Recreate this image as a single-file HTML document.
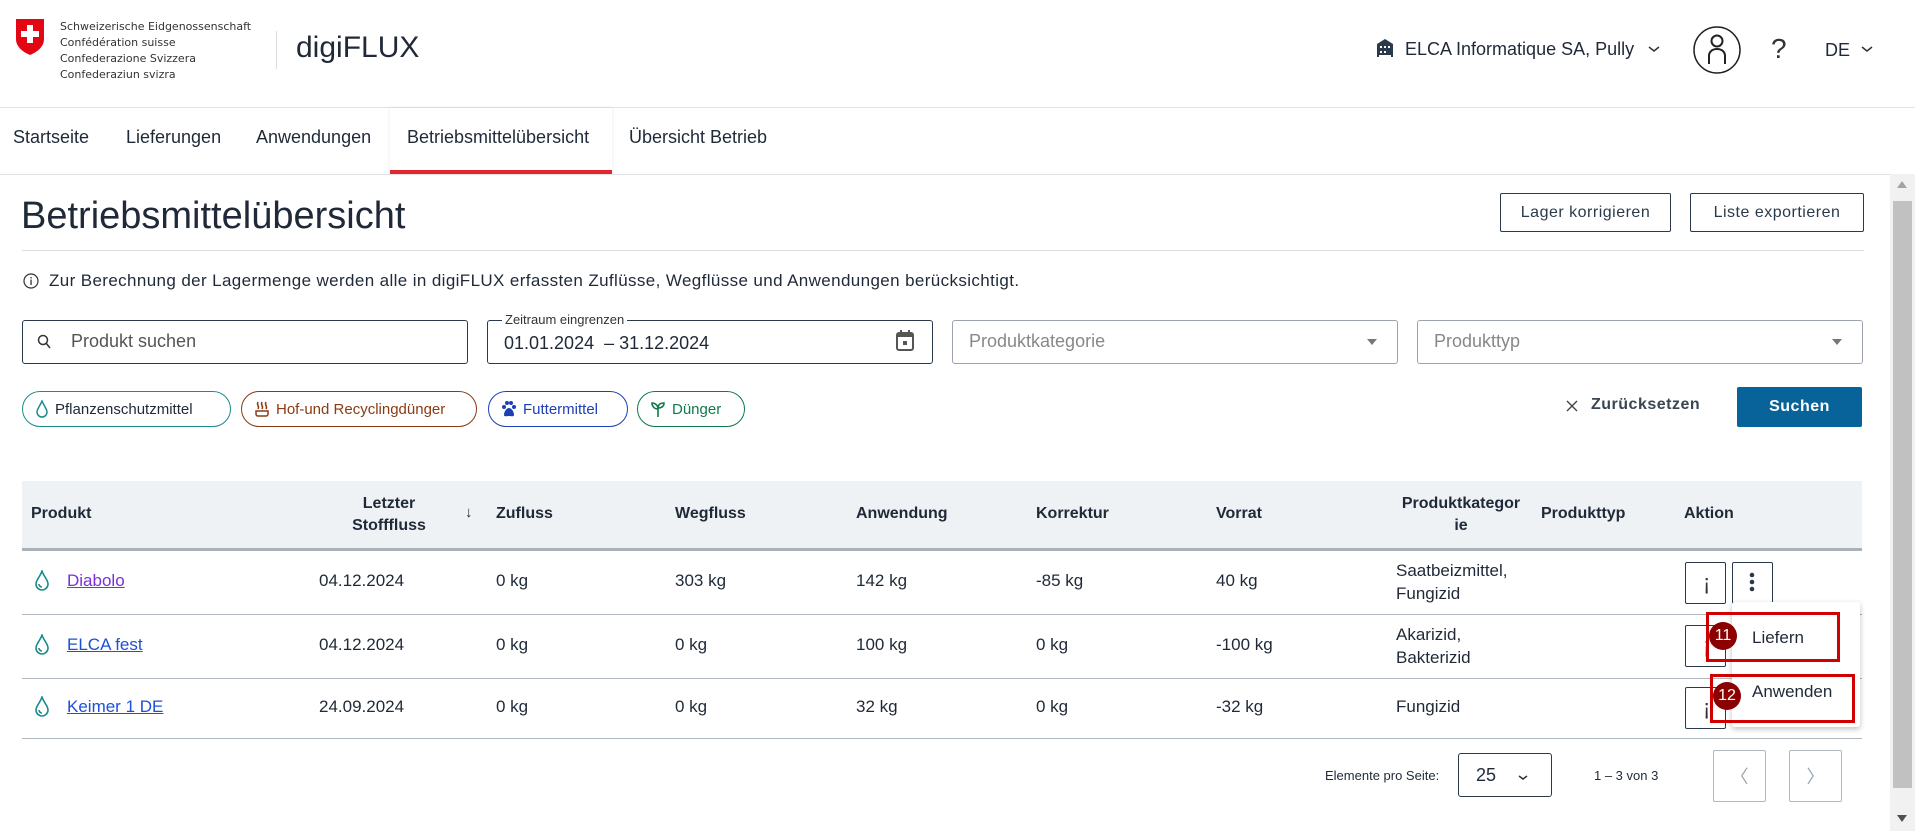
<!DOCTYPE html>
<html><head><meta charset="utf-8"><style>
*{box-sizing:border-box;margin:0;padding:0}
body{width:1915px;height:831px;overflow:hidden;background:#fff;font-family:"Liberation Sans",Arial,sans-serif;color:#1f2937;position:relative}
.a{position:absolute;white-space:nowrap}
.tab{position:absolute;top:127px;font-size:18px;color:#1f2937}
.btn{position:absolute;border:1px solid #2b3a4a;border-radius:2px;font-size:16px;color:#2b3a4a;display:flex;align-items:center;justify-content:center;letter-spacing:.5px}
.inp{position:absolute;top:320px;height:44px;border:1px solid #6b7280;border-radius:3px}
.chip{position:absolute;top:391px;height:36px;border:1px solid;border-radius:18px;font-size:15px;display:flex;align-items:center;padding-left:12px;gap:6px}
.th{position:absolute;font-size:16px;font-weight:bold;color:#1f2937}
.td{position:absolute;font-size:17px;color:#1f2937}
.hl{position:absolute;left:22px;width:1840px;height:1px;background:#b0b7bf}
.lnk{position:absolute;font-size:17px;text-decoration:underline;left:67px}
.ib{position:absolute;width:41px;height:42px;border:1px solid #2b3a4a;border-radius:2px;background:#fff}
</style></head><body>
<svg class="a" style="left:15px;top:18px" width="30" height="38" viewBox="0 0 30 38"><path d="M1 1h28v20c0 8-7 13-14 16C8 34 1 29 1 21z" fill="#e30613"/><path d="M12 7h6v6h6v6h-6v6h-6v-6H6v-6h6z" fill="#fff"/></svg>
<div class="a" style="left:60px;top:19px;line-height:16px;color:#333;font-family:'DejaVu Sans',sans-serif;font-size:11px">Schweizerische Eidgenossenschaft<br>Confédération suisse<br>Confederazione Svizzera<br>Confederaziun svizra</div>
<div class="a" style="left:276px;top:31px;width:1px;height:38px;background:#ddd"></div>
<div class="a" style="left:296px;top:31px;font-size:30px;color:#1f2937">digiFLUX</div>
<svg class="a" style="left:1375px;top:38px" width="20" height="20" viewBox="0 0 20 20"><path d="M2 6 10 1 18 6v13H2z" fill="#2b3a4a"/><g fill="#fff"><rect x="5" y="8" width="2" height="2"/><rect x="9" y="8" width="2" height="2"/><rect x="13" y="8" width="2" height="2"/><rect x="5" y="13" width="2" height="2"/><rect x="9" y="13" width="2" height="2"/><rect x="4" y="17" width="12" height="2"/></g></svg>
<div class="a" style="left:1405px;top:39px;font-size:18px;color:#1f2937">ELCA Informatique SA, Pully</div>
<svg class="a" style="left:1647px;top:45px" width="14" height="9"><path d="M2 2l5 4 5-4" fill="none" stroke="#333" stroke-width="1.5"/></svg>
<svg class="a" style="left:1692px;top:25px" width="50" height="50" viewBox="0 0 50 50"><circle cx="25" cy="25" r="23" fill="none" stroke="#222" stroke-width="1.5"/><circle cx="25" cy="16" r="5.5" fill="none" stroke="#222" stroke-width="2"/><path d="M17 39V31c0-4 3-7 8-7s8 3 8 7v8" fill="none" stroke="#222" stroke-width="2"/></svg>
<div class="a" style="left:1771px;top:33px;font-size:28px;color:#333">?</div>
<div class="a" style="left:1825px;top:40px;font-size:18px;color:#1f2937">DE</div>
<svg class="a" style="left:1860px;top:45px" width="14" height="9"><path d="M2 2l5 4 5-4" fill="none" stroke="#333" stroke-width="1.5"/></svg>
<div class="a" style="left:0;top:107px;width:1915px;height:1px;background:#e0e3e6"></div>
<div class="a" style="left:390px;top:108px;width:222px;height:66px;background:#fff;box-shadow:0 0 4px rgba(0,0,0,.08)"></div>
<div class="a" style="left:390px;top:170px;width:222px;height:4px;background:#e0262f"></div>
<div class="tab" style="left:13px">Startseite</div>
<div class="tab" style="left:126px">Lieferungen</div>
<div class="tab" style="left:256px">Anwendungen</div>
<div class="tab" style="left:407px">Betriebsmittelübersicht</div>
<div class="tab" style="left:629px">Übersicht Betrieb</div>
<div class="a" style="left:0;top:174px;width:1890px;height:1px;background:#e0e3e6"></div>
<div class="a" style="left:1890px;top:174px;width:25px;height:657px;background:#f1f1f1"></div>
<div class="a" style="left:1893px;top:201px;width:19px;height:587px;background:#c1c1c1"></div>
<div class="a" style="left:1897px;top:181px;width:0;height:0;border:5px solid transparent;border-bottom:7px solid #a3a3a3;border-top:0"></div>
<div class="a" style="left:1897px;top:815px;width:0;height:0;border:5px solid transparent;border-top:7px solid #505050;border-bottom:0"></div>
<div class="a" style="left:21px;top:195px;font-size:38px;color:#1f2937">Betriebsmittelübersicht</div>
<div class="btn" style="left:1500px;top:193px;width:171px;height:39px">Lager korrigieren</div>
<div class="btn" style="left:1690px;top:193px;width:174px;height:39px">Liste exportieren</div>
<div class="a" style="left:22px;top:250px;width:1842px;height:1px;background:#dcdfe2"></div>
<svg class="a" style="left:23px;top:273px" width="16" height="16"><circle cx="8" cy="8" r="7" fill="none" stroke="#333" stroke-width="1.2"/><rect x="7.4" y="6.5" width="1.3" height="5.5" fill="#333"/><rect x="7.4" y="4" width="1.3" height="1.4" fill="#333"/></svg>
<div class="a" style="left:49px;top:271px;font-size:17px;letter-spacing:.38px;color:#1f2937">Zur Berechnung der Lagermenge werden alle in digiFLUX erfassten Zuflüsse, Wegflüsse und Anwendungen berücksichtigt.</div>
<div class="inp" style="left:22px;width:446px;border-color:#2b3a4a"></div>
<svg class="a" style="left:37px;top:334px" width="14" height="16"><circle cx="6" cy="6" r="4.5" fill="none" stroke="#333" stroke-width="1.5"/><path d="M9 9l4 5" stroke="#333" stroke-width="1.5"/></svg>
<div class="a" style="left:71px;top:331px;font-size:18px;color:#555">Produkt suchen</div>
<div class="inp" style="left:487px;width:446px;border-color:#2b3a4a"></div>
<div class="a" style="left:502px;top:312px;font-size:13px;background:#fff;padding:0 3px;color:#333">Zeitraum eingrenzen</div>
<div class="a" style="left:504px;top:333px;font-size:18px;color:#1f2937">01.01.2024 &nbsp;– 31.12.2024</div>
<svg class="a" style="left:896px;top:330px" width="18" height="21"><rect x="1" y="3" width="16" height="17" rx="2" fill="none" stroke="#555" stroke-width="2"/><rect x="1" y="3" width="16" height="4" fill="#555"/><rect x="4" y="0" width="2" height="4" fill="#555"/><rect x="12" y="0" width="2" height="4" fill="#555"/><rect x="7" y="11" width="4" height="4" fill="#555"/></svg>
<div class="inp" style="left:952px;width:446px;border-color:#9ca3af"></div>
<div class="a" style="left:969px;top:331px;font-size:18px;color:#888">Produktkategorie</div>
<div class="a" style="left:1367px;top:339px;border:5px solid transparent;border-top:6px solid #777;border-bottom:0"></div>
<div class="inp" style="left:1417px;width:446px;border-color:#9ca3af"></div>
<div class="a" style="left:1434px;top:331px;font-size:18px;color:#888">Produkttyp</div>
<div class="a" style="left:1832px;top:339px;border:5px solid transparent;border-top:6px solid #777;border-bottom:0"></div>
<div class="chip" style="left:22px;width:209px;border-color:#1a8c8c;color:#1f2937"><svg width="14" height="18"><path d="M7 1C5 6 2 9 2 12a5 5 0 0010 0C12 9 9 6 7 1z" fill="none" stroke="#1a8c8c" stroke-width="1.5"/></svg>Pflanzenschutzmittel</div>
<div class="chip" style="left:241px;width:236px;border-color:#8a3b12;color:#8a3b12"><svg width="16" height="18"><path d="M4 2c-2 3 2 4 0 7M8 2c-2 3 2 4 0 7M12 2c-2 3 2 4 0 7M2 11h12v3a2 2 0 01-2 2H4a2 2 0 01-2-2z" fill="none" stroke="#8a3b12" stroke-width="1.5"/></svg>Hof-und Recyclingdünger</div>
<div class="chip" style="left:488px;width:140px;border-color:#1d3fb5;color:#1d3fb5"><svg width="16" height="18"><circle cx="3" cy="7" r="2" fill="#1d3fb5"/><circle cx="6" cy="3" r="2" fill="#1d3fb5"/><circle cx="10" cy="3" r="2" fill="#1d3fb5"/><circle cx="13" cy="7" r="2" fill="#1d3fb5"/><path d="M3 15c0-4 3-7 5-7s5 3 5 7c0 2-3 1-5 1s-5 1-5-1z" fill="#1d3fb5"/></svg>Futtermittel</div>
<div class="chip" style="left:637px;width:108px;border-color:#0f7a4a;color:#0f7a4a"><svg width="16" height="18"><path d="M8 17V9M8 9C8 5 5 3 2 3c0 3 2 6 6 6zM8 8c0-3 2-5 6-5 0 3-2 5-6 5z" fill="none" stroke="#0f7a4a" stroke-width="1.6"/></svg>Dünger</div>
<svg class="a" style="left:1565px;top:399px" width="14" height="14"><path d="M2 2l10 10M12 2L2 12" stroke="#444" stroke-width="1.4"/></svg>
<div class="a" style="left:1591px;top:396px;font-size:16px;font-weight:bold;color:#3a4654;letter-spacing:.5px">Zurücksetzen</div>
<div class="a" style="left:1737px;top:387px;width:125px;height:40px;background:#08639a;border-radius:2px;color:#fff;font-size:16px;font-weight:bold;display:flex;align-items:center;justify-content:center;letter-spacing:.5px">Suchen</div>
<div class="a" style="left:22px;top:481px;width:1840px;height:67px;background:#eef2f5"></div>
<div class="a" style="left:22px;top:548px;width:1840px;height:3px;background:#a9b1ba"></div>
<div class="th" style="left:31px;top:505px">Produkt</div>
<div class="th" style="left:339px;top:493px;text-align:center;line-height:22px;width:100px">Letzter<br>Stofffluss</div>
<div class="a" style="left:465px;top:504px;font-size:15px">↓</div>
<div class="th" style="left:496px;top:505px">Zufluss</div>
<div class="th" style="left:675px;top:505px">Wegfluss</div>
<div class="th" style="left:856px;top:505px">Anwendung</div>
<div class="th" style="left:1036px;top:505px">Korrektur</div>
<div class="th" style="left:1216px;top:505px">Vorrat</div>
<div class="th" style="left:1396px;top:493px;line-height:22px;text-align:center;width:130px">Produktkategor<br>ie</div>
<div class="th" style="left:1541px;top:505px">Produkttyp</div>
<div class="th" style="left:1684px;top:505px">Aktion</div>
<div class="hl" style="top:614px"></div>
<div class="hl" style="top:678px"></div>
<div class="hl" style="top:738px"></div>
<svg class="a" style="left:34px;top:570px" width="16" height="22"><path d="M8 1C6 7 2 10 2 14a6 6 0 0012 0C14 10 10 7 8 1zM5 14a3 3 0 003 3" fill="none" stroke="#1a8c8c" stroke-width="1.6"/></svg>
<svg class="a" style="left:34px;top:634px" width="16" height="22"><path d="M8 1C6 7 2 10 2 14a6 6 0 0012 0C14 10 10 7 8 1zM5 14a3 3 0 003 3" fill="none" stroke="#1a8c8c" stroke-width="1.6"/></svg>
<svg class="a" style="left:34px;top:696px" width="16" height="22"><path d="M8 1C6 7 2 10 2 14a6 6 0 0012 0C14 10 10 7 8 1zM5 14a3 3 0 003 3" fill="none" stroke="#1a8c8c" stroke-width="1.6"/></svg>
<div class="lnk" style="top:571px;color:#7b2fd6">Diabolo</div>
<div class="lnk" style="top:635px;color:#1d4fd8">ELCA fest</div>
<div class="lnk" style="top:697px;color:#1d4fd8">Keimer 1 DE</div>
<div class="td" style="left:319px;top:571px">04.12.2024</div>
<div class="td" style="left:319px;top:635px">04.12.2024</div>
<div class="td" style="left:319px;top:697px">24.09.2024</div>
<div class="td" style="left:496px;top:571px">0 kg</div><div class="td" style="left:496px;top:635px">0 kg</div><div class="td" style="left:496px;top:697px">0 kg</div>
<div class="td" style="left:675px;top:571px">303 kg</div><div class="td" style="left:675px;top:635px">0 kg</div><div class="td" style="left:675px;top:697px">0 kg</div>
<div class="td" style="left:856px;top:571px">142 kg</div><div class="td" style="left:856px;top:635px">100 kg</div><div class="td" style="left:856px;top:697px">32 kg</div>
<div class="td" style="left:1036px;top:571px">-85 kg</div><div class="td" style="left:1036px;top:635px">0 kg</div><div class="td" style="left:1036px;top:697px">0 kg</div>
<div class="td" style="left:1216px;top:571px">40 kg</div><div class="td" style="left:1216px;top:635px">-100 kg</div><div class="td" style="left:1216px;top:697px">-32 kg</div>
<div class="td" style="left:1396px;top:559px;line-height:23px">Saatbeizmittel,<br>Fungizid</div>
<div class="td" style="left:1396px;top:623px;line-height:23px">Akarizid,<br>Bakterizid</div>
<div class="td" style="left:1396px;top:697px">Fungizid</div>
<div class="ib" style="left:1685px;top:562px"></div><div class="a" style="left:1703px;top:570px;font-size:22px;color:#333">¡</div>
<div class="ib" style="left:1732px;top:562px"></div>
<svg class="a" style="left:1748px;top:571px" width="8" height="24"><circle cx="4" cy="4" r="2.3" fill="#2b3a4a"/><circle cx="4" cy="11" r="2.3" fill="#2b3a4a"/><circle cx="4" cy="18" r="2.3" fill="#2b3a4a"/></svg>
<div class="ib" style="left:1685px;top:625px"></div><div class="a" style="left:1703px;top:633px;font-size:22px;color:#333">¡</div>
<div class="ib" style="left:1685px;top:687px"></div><div class="a" style="left:1703px;top:695px;font-size:22px;color:#333">¡</div>
<div class="a" style="left:1732px;top:602px;width:128px;height:125px;background:#fff;box-shadow:0 2px 6px rgba(0,0,0,.25);border-radius:3px"></div>
<div class="a" style="left:1706px;top:612px;width:134px;height:50px;border:3px solid #d00000"></div>
<div class="a" style="left:1710px;top:674px;width:145px;height:49px;border:3px solid #d00000"></div>
<div class="a" style="left:1709px;top:622px;width:28px;height:28px;border-radius:50%;background:#8b0000;color:#fff;font-size:16px;display:flex;align-items:center;justify-content:center">11</div>
<div class="a" style="left:1713px;top:682px;width:28px;height:28px;border-radius:50%;background:#8b0000;color:#fff;font-size:16px;display:flex;align-items:center;justify-content:center">12</div>
<div class="a" style="left:1752px;top:628px;font-size:17px;color:#1f2937">Liefern</div>
<div class="a" style="left:1752px;top:682px;font-size:17px;color:#1f2937">Anwenden</div>
<div class="a" style="left:1325px;top:768px;font-size:13px;color:#1f2937">Elemente pro Seite:</div>
<div class="a" style="left:1458px;top:753px;width:94px;height:44px;border:1px solid #2b3a4a;border-radius:3px"></div>
<div class="a" style="left:1476px;top:765px;font-size:18px">25</div>
<svg class="a" style="left:1517px;top:774px" width="12" height="8"><path d="M2 2l4 3 4-3" fill="none" stroke="#333" stroke-width="1.5"/></svg>
<div class="a" style="left:1594px;top:768px;font-size:13px;color:#1f2937">1 – 3 von 3</div>
<div class="a" style="left:1713px;top:750px;width:53px;height:52px;border:1px solid #b0b7bf;border-radius:2px;color:#9aa3ad;font-size:18px;display:flex;align-items:center;justify-content:center">〈</div>
<div class="a" style="left:1789px;top:750px;width:53px;height:52px;border:1px solid #b0b7bf;border-radius:2px;color:#9aa3ad;font-size:18px;display:flex;align-items:center;justify-content:center">〉</div>
</body></html>
